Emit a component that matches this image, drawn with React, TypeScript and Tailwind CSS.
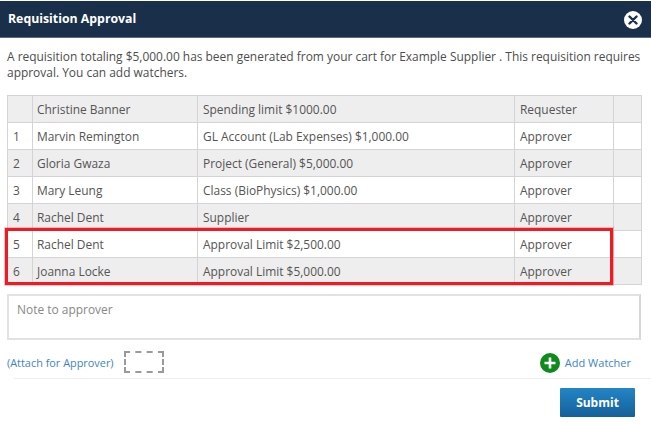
const rows = [
  { num: '', name: 'Christine Banner', rule: 'Spending limit $1000.00', role: 'Requester' },
  { num: '1', name: 'Marvin Remington', rule: 'GL Account (Lab Expenses) $1,000.00', role: 'Approver' },
  { num: '2', name: 'Gloria Gwaza', rule: 'Project (General) $5,000.00', role: 'Approver' },
  { num: '3', name: 'Mary Leung', rule: 'Class (BioPhysics) $1,000.00', role: 'Approver' },
  { num: '4', name: 'Rachel Dent', rule: 'Supplier', role: 'Approver' },
  { num: '5', name: 'Rachel Dent', rule: 'Approval Limit $2,500.00', role: 'Approver' },
  { num: '6', name: 'Joanna Locke', rule: 'Approval Limit $5,000.00', role: 'Approver' },
];

export default function App() {
  return (
    <div className="w-[651px] h-[424px] bg-white overflow-hidden text-[11.94px] text-[#555] font-['Open_Sans',sans-serif]">
      <div className="mt-px h-[37px] pt-px bg-[#1a304a] border-b border-[#5b6b7d] flex items-center justify-between pl-2 pr-[9px]">
        <h2 className="text-[12.3px] font-bold text-white">Requisition Approval</h2>
        <button className="w-[18px] h-[18px] rounded-full bg-white flex items-center justify-center">
          <svg width="10" height="10" viewBox="0 0 10 10">
            <path d="M1.5 1.5 8.5 8.5M8.5 1.5 1.5 8.5" stroke="#1a304a" strokeWidth="2.4" strokeLinecap="round" />
          </svg>
        </button>
      </div>

      <p className="px-[7px] pt-[10px] leading-[16px] text-[#4d4d4d]">
        A requisition totaling $5,000.00 has been generated from your cart for Example Supplier . This requisition requires approval. You can add watchers.
      </p>

      <div className="relative ml-[7px] mt-[15px] w-[634px]">
        <table className="w-full table-fixed border-collapse">
          <colgroup>
            <col className="w-[25px]" />
            <col className="w-[165px]" />
            <col className="w-[317px]" />
            <col className="w-[99px]" />
            <col className="w-[28px]" />
          </colgroup>
          <tbody>
            {rows.map((r, i) => (
              <tr key={i} className={i % 2 === 0 ? 'bg-[#eeeeee] h-[27px]' : 'bg-white h-[27px]'}>
                <td className="border border-[#d4d4d4] pl-[5px] pt-[2px] pb-0">{r.num}</td>
                <td className="border border-[#d4d4d4] pl-[4px] pt-[2px] pb-0">{r.name}</td>
                <td className="border border-[#d4d4d4] pl-[5px] pt-[2px] pb-0">{r.rule}</td>
                <td className="border border-[#d4d4d4] pl-[5px] pt-[2px] pb-0">{r.role}</td>
                <td className="border border-[#d4d4d4]"></td>
              </tr>
            ))}
          </tbody>
        </table>
        <div className="absolute left-[-2px] top-[133px] w-[608px] h-[57px] border-[3px] border-[#ed1c24] shadow-[0_0_0_1px_rgba(237,28,36,0.25)] pointer-events-none"></div>
      </div>

      <div className="ml-[7px] mt-[9px] w-[634px] h-[46px] border-2 border-[#e2e2e2] border-r-[#d8d8d8] px-2 pt-[5px] text-[#888]">
        Note to approver
      </div>

      <div className="mt-[11px] h-[24px] pl-[7px] pr-5 flex items-center justify-between">
        <div className="flex items-center gap-[10px]">
          <a className="text-[10.9px] text-[#3d85c6]">(Attach for Approver)</a>
          <div className="w-[40px] h-[22px] mb-[2px] border-2 border-dashed border-[#999]"></div>
        </div>
        <div className="flex items-center gap-[5px]">
          <span className="w-[20px] h-[20px] rounded-full bg-[#0f8a1d] flex items-center justify-center">
            <svg width="14" height="14" viewBox="0 0 14 14">
              <path d="M7 1.5v11M1.5 7h11" stroke="#fff" strokeWidth="2.6" />
            </svg>
          </span>
          <a className="text-[11px] text-[#3d85c6]">Add Watcher</a>
        </div>
      </div>

      <div className="ml-[14px] mt-[3px] border-t border-[#eeeeee] flex justify-end pr-4 pt-[9px]">
        <button className="w-[75px] h-[29px] bg-gradient-to-b from-[#2385c5] to-[#15609a] text-white text-[12px] font-bold rounded-[1px]">
          Submit
        </button>
      </div>
    </div>
  );
}
